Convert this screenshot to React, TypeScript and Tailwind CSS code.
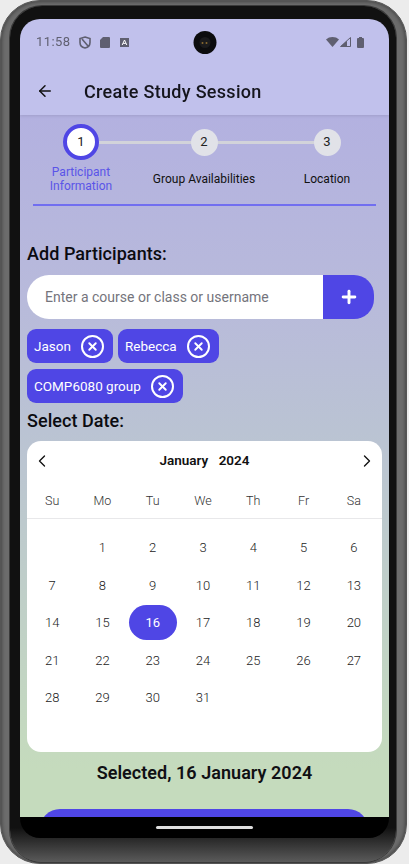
import React from "react";
import { ArrowLeft, ChevronLeft, ChevronRight, Plus, X } from "lucide-react";

function Step({ n, active, label }: { n: number; active?: boolean; label: React.ReactNode }) {
  return (
    <div className="flex w-[96px] flex-col items-center">
      <div className="flex h-[36px] items-center justify-center">
        {active ? (
          <div className="flex h-[36px] w-[36px] items-center justify-center rounded-full border-[4px] border-[#4f46e5] bg-white text-[13px] text-[#222]">{n}</div>
        ) : (
          <div className="flex h-[27px] w-[27px] items-center justify-center rounded-full bg-[#e1e2e8] text-[13px] text-[#222]">{n}</div>
        )}
      </div>
      <div className={"mt-[4px] flex h-[30px] items-center whitespace-nowrap text-center text-[12px] leading-[14px] " + (active ? "text-[#5a54e8]" : "text-[#111]")}>{label}</div>
    </div>
  );
}

function Chip({ label }: { label: string }) {
  return (
    <div className="flex h-[34px] items-center rounded-[9px] bg-[#4f46e5] pl-[7px] pr-[9px] text-[13.5px] text-white">
      <span>{label}</span>
      <span className="ml-[10px] flex h-[23px] w-[23px] items-center justify-center rounded-full border-[2px] border-white">
        <X size={13} strokeWidth={3.5} color="#fff" />
      </span>
    </div>
  );
}

const rows: (number | null)[][] = [
  [null, 1, 2, 3, 4, 5, 6],
  [7, 8, 9, 10, 11, 12, 13],
  [14, 15, 16, 17, 18, 19, 20],
  [21, 22, 23, 24, 25, 26, 27],
  [28, 29, 30, 31, null, null, null],
];

export default function App() {
  return (
    <div className="relative h-[864px] w-[409px] overflow-hidden bg-[#ececec] font-['Roboto',sans-serif]">
      <div className="h-[864px] w-[407px] rounded-[40px] border border-[#555] bg-[#6c6c6c] pb-[1px] pl-[9px] pr-[10px] pt-[5px] shadow-[inset_0_0_4px_rgba(0,0,0,0.55)]">
        <div className="h-full w-full rounded-[32px] bg-[linear-gradient(180deg,#111_96%,#5a5a5a_100%)] pb-[24px] pl-[10px] pr-[7px] pt-[13px] shadow-[0_0_0_1px_#3a3a3a]">
          <div className="relative flex h-full w-full flex-col overflow-hidden rounded-[20px] bg-black [will-change:opacity]">
            <div className="h-[798px] shrink-0 overflow-hidden">
              <div className="relative z-10 bg-[#c1c1ec] shadow-[0_1px_3px_rgba(0,0,0,0.1)]">
                <div className="flex h-[42px] items-center pl-[16px] pr-[25px] pt-[4px] text-[#5f5f70]">
                  <span className="text-[13px] tracking-[0.4px]">11:58</span>
                  <svg className="ml-[9px]" width="12" height="13" viewBox="0 0 12 13" fill="none" stroke="#5f5f70" strokeWidth="1.6"><path d="M6 1 L11 2.5 V6.5 C11 9.5 8.5 11.5 6 12 C3.5 11.5 1 9.5 1 6.5 V2.5 Z M3 3 L9 10" /></svg>
                  <svg className="ml-[9px]" width="10" height="11" viewBox="0 0 10 11" fill="#5f5f70"><path d="M3 0 H9 a1 1 0 0 1 1 1 V10 a1 1 0 0 1 -1 1 H1 a1 1 0 0 1 -1 -1 V3 Z" /></svg>
                  <svg className="ml-[10px]" width="9" height="9" viewBox="0 0 9 9"><rect width="9" height="9" fill="#5f5f70" /><path d="M2.2 7 L4.5 2 L6.8 7 M3.2 5.4 H5.8" stroke="#fff" fill="none" strokeWidth="1" /></svg>
                  <div className="flex-1" />
                  <svg width="13" height="10" viewBox="0 0 13 10" fill="#5f5f70"><path d="M0 2.5 C3.5 -0.8 9.5 -0.8 13 2.5 L6.5 10 Z" /></svg>
                  <svg className="ml-[1px]" width="11" height="10" viewBox="0 0 11 10" fill="none" stroke="#5f5f70"><path d="M10.5 0.5 V9.5 H0.5 Z" /><path d="M6.5 9.5 V4.5 L1.5 9.5 Z" fill="#5f5f70" /></svg>
                  <svg className="ml-[6px]" width="7" height="11" viewBox="0 0 7 11" fill="#5f5f70"><path d="M2 0 H5 V1 H6 a1 1 0 0 1 1 1 V10 a1 1 0 0 1 -1 1 H1 a1 1 0 0 1 -1 -1 V2 a1 1 0 0 1 1 -1 H2 Z" /></svg>
                </div>
                <div className="flex h-[54px] items-center pl-[16px] pt-[6px]">
                  <ArrowLeft size={18} strokeWidth={2} color="#111" />
                  <span className="ml-[30px] text-[18px] font-medium tracking-[0.3px] text-[#15151c]">Create Study Session</span>
                </div>
              </div>

              <div className="h-[702px] bg-[linear-gradient(180deg,#b3b1e0_0%,#b8badb_26%,#bac3d3_45%,#c5dbbd_93%)]">
                <div className="relative mx-[13px] h-[91px] border-b-[2px] border-[#716ef0] pt-[9px]">
                  <div className="absolute left-[66px] top-[26px] h-[3px] w-[216px] bg-[#d2d3da]" />
                  <div className="relative flex gap-[27px]">
                    <Step n={1} active label={<span>Participant<br />Information</span>} />
                    <Step n={2} label="Group Availabilities" />
                    <Step n={3} label="Location" />
                  </div>
                </div>

                <div className="flex flex-col px-[7px]">
                  <div className="mt-[37px] text-[18px] font-medium leading-[22px] tracking-[0.05px] text-[#0b0b10]">Add Participants:</div>
                  <div className="mt-[10px] flex h-[44px] w-[347px]">
                    <div className="flex flex-1 items-center rounded-l-[22px] bg-white pl-[18px] text-[14px] text-[#74747c]">Enter a course or class or username</div>
                    <div className="flex w-[51px] items-center justify-center rounded-r-[20px] bg-[#4f46e5]">
                      <Plus size={20} strokeWidth={3.5} color="#fff" />
                    </div>
                  </div>
                  <div className="mt-[10px] flex w-[300px] flex-wrap gap-x-[5px] gap-y-[6px]">
                    <Chip label="Jason" />
                    <Chip label="Rebecca" />
                    <Chip label="COMP6080 group" />
                  </div>
                  <div className="mt-[7px] text-[18px] font-medium leading-[22px] tracking-[0.05px] text-[#0b0b10]">Select Date:</div>

                  <div className="mt-[9px] h-[311px] w-[355px] rounded-[14px] bg-white">
                    <div className="flex h-[38px] items-center justify-between px-[5px] pt-[1px]">
                      <ChevronLeft size={20} strokeWidth={1.6} color="#111" />
                      <div className="text-[13.5px] font-semibold text-[#111] [word-spacing:7px]">January 2024</div>
                      <ChevronRight size={20} strokeWidth={1.6} color="#111" />
                    </div>
                    <div className="grid h-[40px] grid-cols-7 items-center border-b border-[#e8e8ea] pr-[3px] pt-[6px] text-center text-[12.5px] font-light text-[#333]">
                      {["Su", "Mo", "Tu", "We", "Th", "Fr", "Sa"].map((d) => <div key={d}>{d}</div>)}
                    </div>
                    <div className="mt-[10px] flex flex-col pr-[3px]">
                      {rows.map((r, i) => (
                        <div key={i} className="grid h-[37.5px] grid-cols-7 items-center text-center text-[13px] font-light text-[#222]">
                          {r.map((d, j) => (
                            <div key={j} className="flex items-center justify-center">
                              {d === 16 ? (
                                <span className="flex h-[35px] w-[48px] items-center justify-center rounded-full bg-[#4f46e5] font-normal text-white">{d}</span>
                              ) : d}
                            </div>
                          ))}
                        </div>
                      ))}
                    </div>
                  </div>

                  <div className="mt-[10px] w-[355px] text-center text-[18px] font-semibold leading-[22px] tracking-[0.04px] text-[#101014]">Selected, 16 January 2024</div>
                  <div className="mx-[13px] mt-[25px] h-[40px] w-[328px] rounded-t-[20px] bg-[#4f46e5]" />
                </div>
              </div>
            </div>
            <div className="flex flex-1 items-start justify-center pt-[9px]">
              <div className="h-[3px] w-[97px] rounded-full bg-[#dedede]" />
            </div>
            <div className="absolute left-1/2 top-[12px] z-20 flex h-[23px] w-[23px] -translate-x-1/2 items-center justify-center rounded-full bg-[#0c0c0e]">
              <div className="flex h-[11px] w-[11px] items-center justify-center gap-[2px] rounded-full bg-[#1b1b1d]"><span className="h-[2px] w-[2px] rounded-full bg-[#8a6a30]" /><span className="h-[2px] w-[2px] rounded-full bg-[#8a6a30]" /></div>
            </div>
          </div>
        </div>
      </div>
    </div>
  );
}
